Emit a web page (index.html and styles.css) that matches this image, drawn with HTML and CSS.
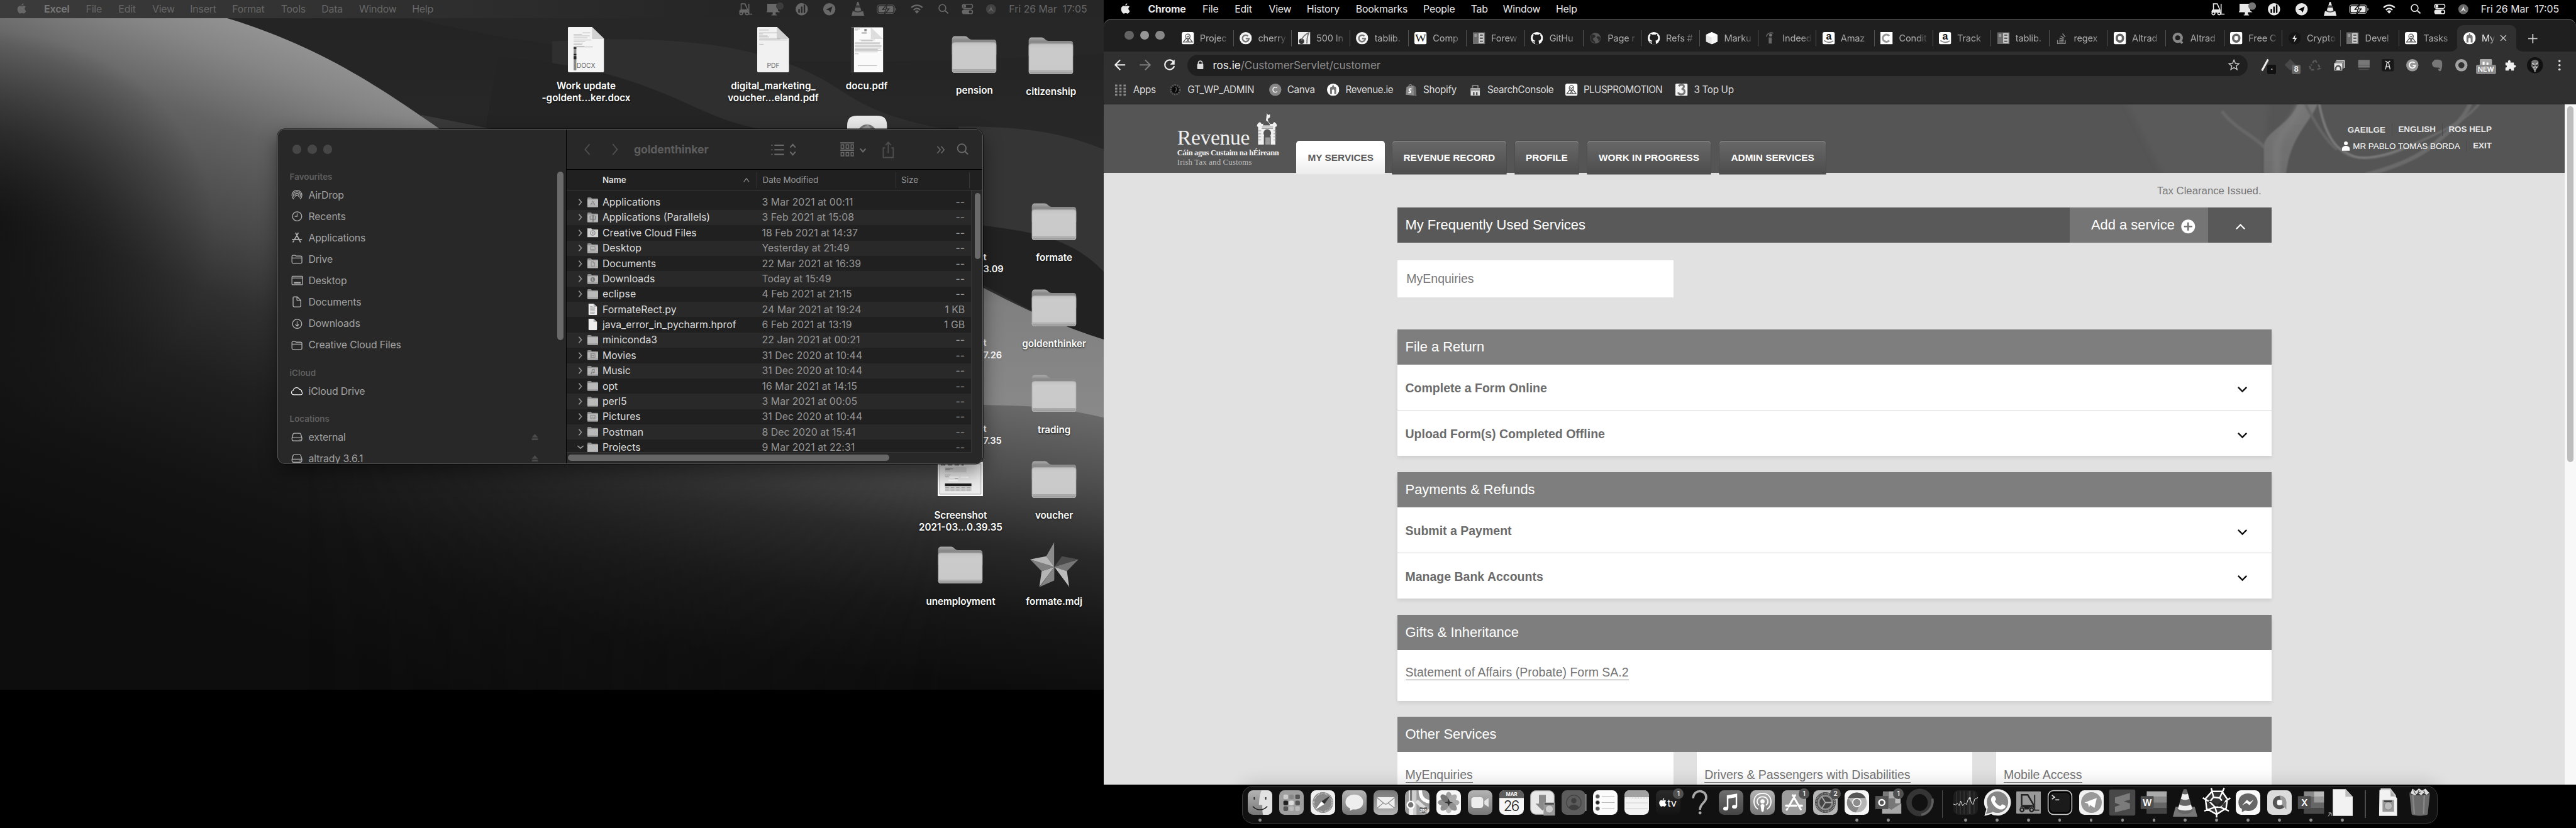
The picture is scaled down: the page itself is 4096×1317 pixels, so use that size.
FILE: index.html
```html
<!DOCTYPE html>
<html lang="en">
<head>
<meta charset="utf-8">
<title>Desktop</title>
<link rel="stylesheet" href="styles.css">
</head>
<body>
<svg class="defs" width="0" height="0">
  <defs>
    <linearGradient id="gFolder" x1="0" y1="0" x2="0" y2="1"><stop offset="0" stop-color="#c3c3c3"/><stop offset=".15" stop-color="#cbcbcb"/><stop offset="1" stop-color="#c9c9c9"/></linearGradient>
    <linearGradient id="gBack" x1="0" y1="0" x2="0" y2="1"><stop offset="0" stop-color="#ababab"/><stop offset=".2" stop-color="#8a8a8a"/><stop offset="1" stop-color="#8a8a8a"/></linearGradient>
    <linearGradient id="gMid" x1="0" y1="0" x2="0" y2="1"><stop offset="0" stop-color="#b4b4b4"/><stop offset="1" stop-color="#777"/></linearGradient>
    <linearGradient id="gMidUp" x1="0" y1="1" x2="0" y2="0"><stop offset="0" stop-color="#b4b4b4"/><stop offset="1" stop-color="#777"/></linearGradient>
    <linearGradient id="gWhite" x1="0" y1="0" x2="0" y2="1"><stop offset="0" stop-color="#fff"/><stop offset="1" stop-color="#d6d6d6"/></linearGradient>
    <linearGradient id="gDark" x1="0" y1="0" x2="0" y2="1"><stop offset="0" stop-color="#6e6e6e"/><stop offset="1" stop-color="#454545"/></linearGradient>
    <linearGradient id="gBlack" x1="0" y1="0" x2="0" y2="1"><stop offset="0" stop-color="#2a2a2a"/><stop offset="1" stop-color="#131313"/></linearGradient>
  </defs>
  <symbol id="apple" viewBox="0 0 24 28"><path d="M12 8.2c1.500 0 3.200-1.400 5.600-1.300 2 .1 3.900 1 5 2.700-4.400 2.700-3.700 8.700.9 10.500-1.200 3.300-3.600 7.400-6.200 7.400-1.900 0-2.500-1.200-4.800-1.200s-3 1.200-4.800 1.200C4.500 27.500.5 21.300.5 15.700.500 10 4 7 7.200 6.900c2.100 0 3.600 1.300 4.800 1.300zM16.500.500c.3 3-2.100 5.900-5 5.800C11.200 3.500 13.700.8 16.500.500z" fill="currentColor"/></symbol>
  <symbol id="extras" viewBox="1925 0 680 48">
    <g fill="none" stroke="currentColor" stroke-width="2.600"><path d="M1934 30V10h10l7 16v6M1930 32c0-4 2-6 5-6h14M1954 10v27h9"/></g>
    <g fill="currentColor"><path d="M1930 26h20v7h-20z"/><circle cx="1934" cy="35" r="5"/><circle cx="1949" cy="35" r="5"/></g>
    <g fill="var(--hole)"><circle cx="1934" cy="35" r="2"/><circle cx="1949" cy="35" r="2"/></g>
    <path d="M2002 10h28v18l6 4h-36l2-4zM2016 32h8v6h3v2h-14v-2h3z" fill="currentColor"/>
    <circle cx="2035" cy="16" r="10" fill="var(--dot)"/>
    <circle cx="2092" cy="24" r="16" fill="currentColor"/><path d="M2085 32v-7M2092 32V19M2099 32V14" stroke="var(--hole)" stroke-width="4" stroke-linecap="round"/>
    <circle cx="2164" cy="24" r="16" fill="currentColor"/><path d="M2155 25l17-8-5 16-4-6z" fill="var(--hole)"/>
    <path d="M2237 5h3l8 24h4l3 12h-33l3-12h4z" fill="currentColor"/><path d="M2234 14h9l2 6h-13zM2229 26c5 5 14 5 19 0l1 4c-5 3-16 3-21 0z" fill="var(--hole)" opacity=".7"/>
    <rect x="2289" y="13" width="45" height="22" rx="6" fill="none" stroke="currentColor" stroke-width="2" opacity=".7"/><rect x="2292" y="16" width="39" height="16" rx="3" fill="currentColor"/><path d="M2336 21c3 0 3 7 0 7z" fill="currentColor"/><path d="M2315 11l-12 14h8l-4 13 13-15h-8z" fill="currentColor" stroke="var(--hole)" stroke-width="2"/>
    <g fill="none" stroke="currentColor" stroke-width="4"><path d="M2378 20c8-8 21-8 29 0"/><path d="M2384 26c5-5 12-5 17 0"/></g><path d="M2387 29.500c3-3 8-3 11 0l-5.500 6z" fill="currentColor"/>
    <circle cx="2459" cy="21" r="9" fill="none" stroke="currentColor" stroke-width="2.600"/><path d="M2466 28l8 7" stroke="currentColor" stroke-width="3.200"/>
    <rect x="2511" y="11" width="27" height="11" rx="5.500" fill="none" stroke="currentColor" stroke-width="2.400"/><circle cx="2517" cy="16.500" r="4" fill="currentColor"/><rect x="2510" y="25" width="29" height="12" rx="6" fill="currentColor"/><circle cx="2532" cy="31" r="4" fill="var(--hole)"/>
    <circle cx="2586" cy="24" r="13" fill="currentColor" opacity=".45"/><path d="M2576 31c6-3 9-9 10-16 1 7 4 13 10 16-5-1-8-3-10-6-2 3-5 5-10 6z" fill="currentColor"/>
  </symbol>
  <symbol id="folder" viewBox="0 0 118 98"><path d="M1 12C1 4 4 1 10 1h25c7 0 10 9 18 9h56c6 0 8 3 8 9v30H1z" fill="url(#gBack)"/><path d="M1 24c0-5 3-7 8-7h100c5 0 8 2 8 7v65c0 6-3 8-8 8H9c-5 0-8-2-8-8z" fill="#b8b8b8"/><path d="M3 25c0-4 2-6 7-6h98c5 0 7 2 7 6v62H3z" fill="url(#gFolder)"/><path d="M2 88h114M2 91h114" stroke="#a2a2a2" stroke-width="1.500"/><path d="M3 92h112c-1 3-3 4-7 4H10c-4 0-6-1-7-4z" fill="#9f9f9f"/></symbol>
  <symbol id="fold" viewBox="0 0 28 26"><path d="M0 3c0-2 1-3 2-3h7l3 3h14c1 0 2 1 2 2v4H0z" fill="#8e8e8e"/><path d="M0 5.500h28V24c0 1-1 2-2 2H2c-1 0-2-1-2-2z" fill="#b9b9b9"/><path d="M0 22.500h28" stroke="#888"/></symbol>
  <symbol id="chev" viewBox="0 0 10 18"><path d="M1.500 2l6 7-6 7" fill="none" stroke="currentColor" stroke-width="2.800" stroke-linecap="round" stroke-linejoin="round"/></symbol>
  <symbol id="file" viewBox="0 0 28 30"><path d="M3 0h13l9 8v20c0 1-1 2-2 2H5c-1 0-2-1-2-2z" fill="#eee"/><path d="M16 0v8h9z" fill="#b5b5b5"/></symbol>
  <symbol id="s-folder" viewBox="0 0 30 30"><path d="M2 8c0-2 1-3 3-3h5l3 2h12c2 0 3 1 3 3v13c0 2-1 3-3 3H5c-2 0-3-1-3-3zM2 12h26" fill="none" stroke="currentColor" stroke-width="2.200"/></symbol>
  <symbol id="s-disk" viewBox="0 0 30 30"><path d="M8 5h14c2 0 2.500 1 3 2l3 11c0 5-1 7-4 7H6c-3 0-4-2-4-7L5 7c.500-1 1-2 3-2zM2.500 17h25M22 21h2" fill="none" stroke="currentColor" stroke-width="2.200"/></symbol>
  <symbol id="eject" viewBox="0 0 20 20"><path d="M10 1l9 10H1zM1 14h18v5H1z" fill="currentColor"/></symbol>
  <symbol id="caret" viewBox="0 0 28 18"><path d="M3 3l11 11L25 3" fill="none" stroke="currentColor" stroke-width="4"/></symbol>

  <symbol id="f-asana" viewBox="0 0 32 32"><rect width="32" height="32" rx="5" fill="#fff"/><g fill="none" stroke="#555" stroke-width="2"><circle cx="16" cy="11" r="6"/><path d="M4 26l8-10 8 10zM12 26l8-10 8 10zM13 10l3 3 4-4"/></g></symbol>
  <symbol id="f-g" viewBox="0 0 32 32"><circle cx="16" cy="16" r="16" fill="#f5f5f5"/><path d="M22 10.500A8.500 8.500 0 1 0 24.500 17H16" fill="none" stroke="#777" stroke-width="4"/></symbol>
  <symbol id="f-cherry" viewBox="0 0 32 32"><path fill="#eee" d="M0 0h32v32H0z"/><circle cx="9" cy="24" r="7" fill="#333"/><path d="M9 22C12 12 18 6 28 2c-4 9-5 17-5 28" stroke="#777" stroke-width="3" fill="none"/></symbol>
  <symbol id="f-w" viewBox="0 0 32 32"><rect width="32" height="32" rx="5" fill="#fff"/><text x="16" y="25" font-family="Liberation Serif,serif" font-size="27" text-anchor="middle" textLength="28" lengthAdjust="spacingAndGlyphs" fill="#111">W</text></symbol>
  <symbol id="f-rtd" viewBox="0 0 32 32"><path fill="#6d6d6d" d="M0 1h32v30H0z"/><path fill="#ccc" d="M15 3h14v26H15z"/><path d="M18 8h8M18 16h8M18 24h8" stroke="#444" stroke-width="3"/><path d="M4 5h6v8H4z" fill="#999"/></symbol>
  <symbol id="f-gh" viewBox="0 0 32 32"><circle cx="16" cy="16" r="16" fill="#fff"/><path d="M11 32v-5c-4 1-5-2-7-3 3-1 4 2 7 1 0-1 .5-2 1-2.500-5-.5-7-3-7-8 0-2 .6-3.500 2-5-.3-1.500-.2-3 .3-4.500 2 0 3.500 1 5 2 2.500-.6 5-.6 7.400 0 1.500-1 3-2 5-2 .5 1.500.6 3 .3 4.500 1.400 1.500 2 3 2 5 0 5-2 7.500-7 8 .8.800 1.200 2 1.200 3.500V32z" fill="#1f1f1f"/></symbol>
  <symbol id="f-globe" viewBox="0 0 32 32"><circle cx="16" cy="16" r="14" fill="#555"/><path d="M8 6c5 0 9 2 8 6s-7 2-6 7 6 3 5 9c-7-1-12-5-12-12 0-4 2-8 5-10zM20 12c5-2 8 0 9 3s-1 7-4 9c-2-2 0-5-2-6s-5-4-3-6z" fill="#2a2a2a"/></symbol>
  <symbol id="f-cube" viewBox="0 0 32 32"><path d="M16 0l15 7v18l-15 7-15-7V7z" fill="#e6e6e6"/><path d="M16 0l15 7-15 7L1 7z" fill="#fff"/><path d="M16 14v18l15-7V7z" fill="#f6f6f6"/></symbol>
  <symbol id="f-indeed" viewBox="0 0 32 32"><path d="M12 14h8v16h-8z" fill="#666"/><circle cx="17" cy="8" r="4" fill="#777"/><path d="M6 12C8 3 16 0 24 3" fill="none" stroke="#666" stroke-width="2.500"/></symbol>
  <symbol id="f-a" viewBox="0 0 32 32"><rect width="32" height="32" rx="5" fill="#fff"/><text x="16" y="20" font-family="Liberation Sans,sans-serif" font-weight="700" font-size="26" text-anchor="middle" fill="#111">a</text><path d="M4 22c7 6 16 6 24 1" fill="none" stroke="#888" stroke-width="3"/></symbol>
  <symbol id="f-c" viewBox="0 0 32 32"><path fill="#fff" d="M0 0h32v32H0z"/><path d="M23 10a9.500 9.500 0 1 0 0 12" fill="none" stroke="#999" stroke-width="5"/></symbol>
  <symbol id="f-so" viewBox="0 0 32 32"><path d="M6 21v9h20v-9M10 26h12M10 21l12 1M11 16l11 3M14 10l9 6M19 4l7 9" fill="none" stroke="#888" stroke-width="2.400"/></symbol>
  <symbol id="f-o" viewBox="0 0 32 32"><rect width="32" height="32" rx="4" fill="#fff"/><rect x="8" y="7" width="16" height="18" rx="8" fill="none" stroke="#666" stroke-width="6"/></symbol>
  <symbol id="f-q" viewBox="0 0 32 32"><circle cx="16" cy="15" r="10" fill="none" stroke="#888" stroke-width="7"/><path d="M20 20l8 9" stroke="#888" stroke-width="6"/></symbol>
  <symbol id="f-bolt" viewBox="0 0 32 32"><circle cx="16" cy="16" r="16" fill="#151515"/><path d="M18 6l-8 12h6l-2 9 8-12h-6z" fill="#eee"/></symbol>
  <symbol id="f-rev" viewBox="0 0 32 32"><circle cx="16" cy="16" r="16" fill="#fff"/><path d="M8 27V11l2-3h3l3-6 3 6h3l2 3v16h-5v-9c0-4-6-4-6 0v9z" fill="#777"/></symbol>
  <symbol id="f-three" viewBox="0 0 32 32"><rect width="32" height="32" rx="3" fill="#f4f4f4"/><path d="M9 7c3-6 14-5 13 1 0 4-4 6-6 6 5 0 8 3 8 7 0 8-14 10-17 2" fill="none" stroke="#777" stroke-width="5"/></symbol>
</svg>

<div class="stage">

<!-- left display -->
<section class="display left">
  <svg class="wallpaper" viewBox="0 0 2880 1800" preserveAspectRatio="none">
    <defs>
      <linearGradient id="wBase" x1="0" y1="0" x2="0" y2="1"><stop offset="0" stop-color="#232323"/><stop offset=".3" stop-color="#2a2a2a"/><stop offset=".7" stop-color="#262626"/><stop offset="1" stop-color="#0c0c0c"/></linearGradient>
      <linearGradient id="wSweep" gradientUnits="userSpaceOnUse" x1="1000" y1="160" x2="475" y2="1570"><stop offset="0" stop-color="#979797"/><stop offset=".08" stop-color="#868686"/><stop offset=".2" stop-color="#636363"/><stop offset=".36" stop-color="#494949"/><stop offset=".48" stop-color="#303030"/><stop offset=".62" stop-color="#1f1f1f"/><stop offset=".8" stop-color="#131313"/><stop offset="1" stop-color="#0d0d0d"/></linearGradient>
      <linearGradient id="wRight" x1="0" y1="0" x2="0" y2="1"><stop offset="0" stop-color="#6c6c6c"/><stop offset=".25" stop-color="#808080"/><stop offset="1" stop-color="#8a8a8a"/></linearGradient>
      <linearGradient id="wLow" gradientUnits="userSpaceOnUse" x1="2700" y1="1050" x2="2600" y2="1800"><stop offset="0" stop-color="#6b6b6b"/><stop offset=".25" stop-color="#4e4e4e"/><stop offset=".5" stop-color="#292929"/><stop offset=".75" stop-color="#161616"/><stop offset="1" stop-color="#0c0c0c"/></linearGradient>
      <linearGradient id="wFade" x1="0" y1="0" x2="1" y2="0"><stop offset="0" stop-color="#000"/><stop offset=".35" stop-color="#555"/><stop offset="1" stop-color="#fff"/></linearGradient>
      <mask id="mLow" maskUnits="userSpaceOnUse" x="800" y="1000" width="2080" height="800"><rect x="800" y="1000" width="1700" height="800" fill="url(#wFade)"/><rect x="2498" y="1000" width="382" height="800" fill="#fff"/></mask>
      <radialGradient id="wBlob"><stop offset="0" stop-color="#0e0e0e" stop-opacity=".85"/><stop offset=".5" stop-color="#0e0e0e" stop-opacity=".5"/><stop offset="1" stop-color="#0e0e0e" stop-opacity="0"/></radialGradient>
    </defs>
    <rect width="2880" height="1800" fill="url(#wBase)"/>
    <path d="M900 0c400 120 900 200 1980 140V0z" fill="#272727"/>
    <path d="M1440 108C1900 80 2080 160 2200 240s240 100 680 160v500H1440z" fill="#2f2f2f"/>
    <path d="M1300 150c300 20 420 90 560 150s300 50 400 110v300H1200z" fill="#242424"/>
    <path d="M2500 330c150 0 260 10 380 60v330c-100-100-240-110-380-130z" fill="#353535"/>
    <path d="M2500 580c130 20 280 20 380 130v200l-380-200z" fill="#222"/>
    <path d="M1100 300l200 40v60h-300z" fill="#3a3a3a"/>
    <path d="M0 0H400C760 70 950 200 1148 337L2500 1050H2880V1800H0z" fill="url(#wSweep)"/>
    <ellipse cx="-40" cy="600" rx="600" ry="520" fill="url(#wBlob)"/>
    <path d="M2450 690c150 80 280 150 430 196v230H2450z" fill="url(#wRight)"/>
    <path d="M800 1160l1650-110c150 15 250-5 430 40v710H800z" fill="url(#wLow)" mask="url(#mLow)"/>
  </svg>

  <nav class="menubar dim">
    <svg class="apple"><use href="#apple"/></svg>
    <b style="width:109px">Excel</b><span style="width:85px">File</span><span style="width:88px">Edit</span><span style="width:99px">View</span><span style="width:110px">Insert</span><span style="width:127px">Format</span><span style="width:106px">Tools</span><span style="width:98px">Data</span><span style="width:138px">Window</span><span>Help</span>
    <svg class="extras"><use href="#extras"/></svg><time>Fri 26 Mar&nbsp; 17:05</time>
  </nav>

  <figure class="item" style="left:1409px;top:70px"><svg class="doc" width="94" height="118" viewBox="0 0 94 118"><path d="M3 0h60l31 30v85c0 2-1 3-3 3H3c-2 0-3-1-3-3V3c0-2 1-3 3-3z" fill="#f4f4f4"/><path d="M63 0v31h31z" fill="#d2d2d2"/><path d="M38 15h20M15 19h22M15 23h42M15 28h36M15 34h46M15 37h30M15 42h24M15 45h22M15 50h28M15 52h50" stroke="#999" stroke-width="1"/><path d="M15 53h7v60h-7z" fill="#888"/><path d="M15 53h7v4h-7zM15 70h7v4h-7zM15 76h7v8h-7z" fill="#222"/><text x="47" y="107" font-size="17" text-anchor="middle" fill="#666">DOCX</text></svg><figcaption>Work update<br>-goldent...ker.docx</figcaption></figure>
  <figure class="item" style="left:1897px;top:70px"><svg class="doc" width="83" height="118" viewBox="0 0 83 118"><path d="M3 0h49l31 30v85c0 2-1 3-3 3H3c-2 0-3-1-3-3V3c0-2 1-3 3-3z" fill="#f1f1f1"/><path d="M51 0v31h32z" fill="#cfcfcf"/><path d="M5 8h25M5 15h47M5 18h10M5 23h22M5 26h26M5 31h55M5 34h74M5 45h12" stroke="#999"/><text x="42" y="107" font-size="17" text-anchor="middle" fill="#666">PDF</text></svg><figcaption>digital_marketing_<br>voucher...eland.pdf</figcaption></figure>
  <figure class="item" style="left:2141px;top:70px"><svg class="doc" width="84" height="118" viewBox="0 0 84 118"><rect y="1" width="84" height="117" rx="2" fill="#fafafa"/><path d="M0 1h8v117H0z" fill="#333"/><path d="M52 1v30h32z" fill="#ddd"/><path d="M35 5h6v6h-6z" fill="#888"/><path d="M28 14h13M28 17h13M10 5h14M10 8h8M22 34h40M27 36h30M10 41h66M10 44h66M10 49h70M10 52h70M10 55h68M10 58h60M10 61h70M10 65h60M10 70h10M18 101h50" stroke="#8a8a8a"/></svg><figcaption>docu.pdf</figcaption></figure>
  <svg class="free" style="left:2210px;top:302px" width="104" height="60" viewBox="0 0 104 60"><path d="M0 60V26C0 8 8 0 26 0h52c18 0 26 8 26 26v34z" fill="#e9e9e9"/><circle cx="52" cy="48" r="25" fill="#777"/><path d="M35 35l20-12 20 30z" fill="#999"/></svg>
  <figure class="item" style="left:2422px;top:93px"><svg width="118" height="98"><use href="#folder"/></svg><figcaption>pension</figcaption></figure>
  <figure class="item" style="left:2622px;top:96px"><svg width="118" height="98"><use href="#folder"/></svg><figcaption>citizenship</figcaption></figure>
  <figure class="item" style="left:2630px;top:530px"><svg width="118" height="98"><use href="#folder"/></svg><figcaption>formate</figcaption></figure>
  <figure class="item" style="left:2630px;top:754px"><svg width="118" height="98"><use href="#folder"/></svg><figcaption>goldenthinker</figcaption></figure>
  <figure class="item" style="left:2630px;top:978px"><svg width="118" height="98"><use href="#folder"/></svg><figcaption>trading</figcaption></figure>
  <figure class="item" style="left:2630px;top:1202px"><svg width="118" height="98"><use href="#folder"/></svg><figcaption>voucher</figcaption></figure>
  <figure class="item" style="left:2386px;top:1426px"><svg width="118" height="98"><use href="#folder"/></svg><figcaption>unemployment</figcaption></figure>
  <figure class="item" style="left:2386px;top:1202px"><svg width="118" height="98" viewBox="0 -3 118 98"><path d="M0 0h118v89H0z" fill="#fff"/><path d="M5 5h108v79H5z" fill="#ececec" stroke="#777"/><path d="M8 8h60" stroke="#333" stroke-width="2" stroke-dasharray="12 6"/><path d="M19 14h56v13H19z" fill="#d8d8d8"/><path d="M20 18h20M20 20h12M19 34h14M19 39h10M45 43h8" stroke="#555" stroke-width="1"/><path d="M31 38h24v3H31zM60 38h20v3H60zM28 46h25v4H28z" fill="#fff"/><path d="M19 56h69v7H19z" fill="#1c1c1c"/><path d="M19 64h69v12H19z" fill="#ccc"/><path d="M20 67h66M20 73h66" stroke="#777" stroke-dasharray="9 5"/></svg><figcaption>Screenshot<br>2021-03...0.39.35</figcaption></figure>
  <figure class="item" style="left:2630px;top:1412px"><svg width="126" height="118" viewBox="0 0 126 118" style="margin-bottom:-6px"><g transform="translate(0 2)"><path d="M63 65V0L42 37z" fill="#8c8c8c"/><path d="M63 65V0l20 37z" fill="#2a2a2a"/><path d="M63 65L83 37l43 8z" fill="#4c4c4c"/><path d="M63 65l63-20-30 31z" fill="#767676"/><path d="M63 65l33 11 6 42z" fill="#bcbcbc"/><path d="M63 65v35l39 17z" fill="#222"/><path d="M63 65v35l-38 17z" fill="#838383"/><path d="M63 65L30 76l-6 41z" fill="#b4b4b4"/><path d="M63 65L30 76 0 45z" fill="#808080"/><path d="M63 65L0 45l42-8z" fill="#b6b6b6"/></g></svg><figcaption>formate.mdj</figcaption></figure>
  <p class="cut" style="top:656px"><span>t</span>3.09</p>
  <p class="cut" style="top:880px"><span>t</span>7.26</p>
  <p class="cut" style="top:1104px"><span>t</span>7.35</p>

  <div class="finder">
    <aside>
      <div class="lights"><i></i><i></i><i></i></div>
      <h4>Favourites</h4>
      <ul>
        <li><svg viewBox="0 0 30 30"><g fill="none" stroke="currentColor" stroke-width="2"><path d="M7 26a13 13 0 1 1 16 0M9 22a9 9 0 1 1 12 0M11.500 19a5 5 0 1 1 7 0"/></g><circle cx="15" cy="16" r="2" fill="currentColor"/></svg>AirDrop</li>
        <li><svg viewBox="0 0 30 30"><circle cx="15.500" cy="15" r="12" fill="none" stroke="currentColor" stroke-width="2.200"/><path d="M15.500 7v8H9" fill="none" stroke="currentColor" stroke-width="2"/></svg>Recents</li>
        <li><svg viewBox="0 0 30 30"><path d="M12 3l12 23M18 3L9 19M3 20h15M21 20h6M7 23l-2 3" fill="none" stroke="currentColor" stroke-width="3" stroke-linecap="round"/></svg>Applications</li>
        <li><svg><use href="#s-folder"/></svg>Drive</li>
        <li><svg viewBox="0 0 30 30"><rect x="2" y="4" width="28" height="22" rx="2" fill="none" stroke="currentColor" stroke-width="2.200"/><path d="M2 8.500h28" stroke="currentColor" stroke-width="2"/><path d="M7 21h18" stroke="currentColor" stroke-width="4"/></svg>Desktop</li>
        <li><svg viewBox="0 0 30 30"><path d="M5 4c0-1 1-2 2-2h9l9 9v14c0 2-1 3-3 3H8c-2 0-3-1-3-3zM15 2v8c0 1 1 2 2 2h8" fill="none" stroke="currentColor" stroke-width="2.200"/></svg>Documents</li>
        <li><svg viewBox="0 0 30 30"><circle cx="15.500" cy="15" r="12" fill="none" stroke="currentColor" stroke-width="2.200"/><path d="M15.500 8v13M11 16.500l4.500 4.500 4.500-4.500" fill="none" stroke="currentColor" stroke-width="2"/></svg>Downloads</li>
        <li><svg><use href="#s-folder"/></svg>Creative Cloud Files</li>
      </ul>
      <h4>iCloud</h4>
      <ul><li><svg viewBox="0 0 32 30"><path d="M8 25c-9 0-9-11-2-12 1-8 13-11 17-3 6 0 7 5 6 7 4 3 2 8-3 8z" fill="none" stroke="#eee" stroke-width="2.200"/></svg>iCloud Drive</li></ul>
      <h4>Locations</h4>
      <ul>
        <li><svg><use href="#s-disk"/></svg>external<svg class="eject"><use href="#eject"/></svg></li>
        <li><svg><use href="#s-disk"/></svg>altrady 3.6.1<svg class="eject"><use href="#eject"/></svg></li>
      </ul>
      <div class="bar side"></div>
    </aside>
    <main>
      <header>
        <svg viewBox="0 0 1086 105"><g fill="none" stroke="#4e4e4e" stroke-width="3"><path d="M60 38L48 52l12 14M120 38l12 14-12 14"/><path d="M831 48h-5v25h26V48h-5M839 62V34M832 41l7-8 7 8"/></g><g fill="none" stroke="#696969" stroke-width="3.400"><path d="M542 41h25M542 53h25M542 65h25M534 41h3M534 53h3M534 65h3M583 47l7-8 7 8M583 58l7 8 7-8"/><path d="M714 35h36M714 54h36"/><path d="M716 40h7v9h-7zM729 40h7v9h-7zM742 40h6v9h-6zM716 60h7v9h-7zM729 60h7v9h-7zM742 60h6v9h-6z" stroke-width="2.600"/><path d="M766 50l7 8 7-8"/><path d="M967 44l8 9-8 9M977 44l8 9-8 9" stroke-width="2.600"/><circle cx="1031" cy="49" r="11" stroke-width="3"/><path d="M1039 57l8 8" stroke-width="3.500"/></g></svg>
        <strong>goldenthinker</strong>
      </header>
      <div class="heads"><b>Name</b><svg viewBox="0 0 16 14"><path d="M1 12l7-9 7 9" fill="none" stroke="#888" stroke-width="2"/></svg><span class="d">Date Modified</span><span class="s">Size</span></div>
      <ul class="rows">
        <li><svg class="ch"><use href="#chev"/></svg><svg class="ic" viewBox="0 0 28 26"><use href="#fold"/><path d="M14 9l-5 11M14 9l5 11M8 17h12" stroke="#7a7a7a" stroke-width="1.500"/></svg><span>Applications</span><time>3 Mar 2021 at 00:11</time><em>--</em></li>
        <li><svg class="ch"><use href="#chev"/></svg><svg class="ic" viewBox="0 0 28 26"><use href="#fold"/><path d="M7 9h14v9H7zM13 6v18M16 6v18" stroke="#777" stroke-width="2" fill="none"/></svg><span>Applications (Parallels)</span><time>3 Feb 2021 at 15:08</time><em>--</em></li>
        <li><svg class="ch"><use href="#chev"/></svg><svg class="ic" viewBox="0 0 28 26"><path d="M0 2h10l3 3h15v20H0z" fill="#d2d2d2"/><circle cx="14" cy="14" r="6" fill="none" stroke="#888" stroke-width="2"/><circle cx="14" cy="14" r="2" fill="#888"/></svg><span>Creative Cloud Files</span><time>18 Feb 2021 at 14:37</time><em>--</em></li>
        <li><svg class="ch"><use href="#chev"/></svg><svg class="ic" viewBox="0 0 28 26"><use href="#fold"/><path d="M8 9h12v9H8zM10 16h8" stroke="#888" stroke-width="1.600" fill="none"/></svg><span>Desktop</span><time>Yesterday at 21:49</time><em>--</em></li>
        <li><svg class="ch"><use href="#chev"/></svg><svg class="ic" viewBox="0 0 28 26"><use href="#fold"/><path d="M10 8h5l4 4v8h-9zM15 8v4h4" stroke="#888" stroke-width="1.500" fill="none"/></svg><span>Documents</span><time>22 Mar 2021 at 16:39</time><em>--</em></li>
        <li><svg class="ch"><use href="#chev"/></svg><svg class="ic" viewBox="0 0 28 26"><use href="#fold"/><circle cx="14" cy="14" r="6" fill="#777"/><path d="M14 10v7M11 14.500l3 3 3-3" stroke="#bbb" stroke-width="1.500" fill="none"/></svg><span>Downloads</span><time>Today at 15:49</time><em>--</em></li>
        <li><svg class="ch"><use href="#chev"/></svg><svg class="ic" viewBox="0 0 28 26"><use href="#fold"/></svg><span>eclipse</span><time>4 Feb 2021 at 21:15</time><em>--</em></li>
        <li><i class="ch"></i><svg class="ic tall" viewBox="0 0 28 30"><use href="#file"/><path d="M7 7h7M7 10h13M7 13h14M7 16h12M7 19h14M7 22h13M7 25h12" stroke="#999" stroke-width="1.500"/></svg><span>FormateRect.py</span><time>24 Mar 2021 at 19:24</time><em>1 KB</em></li>
        <li><i class="ch"></i><svg class="ic tall" viewBox="0 0 28 30"><use href="#file"/></svg><span>java_error_in_pycharm.hprof</span><time>6 Feb 2021 at 13:19</time><em>1 GB</em></li>
        <li><svg class="ch"><use href="#chev"/></svg><svg class="ic" viewBox="0 0 28 26"><use href="#fold"/></svg><span>miniconda3</span><time>22 Jan 2021 at 00:21</time><em>--</em></li>
        <li><svg class="ch"><use href="#chev"/></svg><svg class="ic" viewBox="0 0 28 26"><use href="#fold"/><path d="M8 9h12v10H8zM11 9v10M17 9v10M11 14h6" stroke="#888" stroke-width="1.500" fill="none"/></svg><span>Movies</span><time>31 Dec 2020 at 10:44</time><em>--</em></li>
        <li><svg class="ch"><use href="#chev"/></svg><svg class="ic" viewBox="0 0 28 26"><use href="#fold"/><path d="M12 19v-9l6-2v9" stroke="#777" stroke-width="1.600" fill="none"/><circle cx="10.500" cy="19" r="2" fill="#777"/><circle cx="16.500" cy="17" r="2" fill="#777"/></svg><span>Music</span><time>31 Dec 2020 at 10:44</time><em>--</em></li>
        <li><svg class="ch"><use href="#chev"/></svg><svg class="ic" viewBox="0 0 28 26"><use href="#fold"/></svg><span>opt</span><time>16 Mar 2021 at 14:15</time><em>--</em></li>
        <li><svg class="ch"><use href="#chev"/></svg><svg class="ic" viewBox="0 0 28 26"><use href="#fold"/></svg><span>perl5</span><time>3 Mar 2021 at 00:05</time><em>--</em></li>
        <li><svg class="ch"><use href="#chev"/></svg><svg class="ic" viewBox="0 0 28 26"><use href="#fold"/><path d="M8 9h12v9H8zM9 17l4-4 3 3 2-2 2 3" stroke="#888" stroke-width="1.500" fill="none"/></svg><span>Pictures</span><time>31 Dec 2020 at 10:44</time><em>--</em></li>
        <li><svg class="ch"><use href="#chev"/></svg><svg class="ic" viewBox="0 0 28 26"><use href="#fold"/></svg><span>Postman</span><time>8 Dec 2020 at 15:41</time><em>--</em></li>
        <li><svg class="ch open"><use href="#chev"/></svg><svg class="ic" viewBox="0 0 28 26"><use href="#fold"/></svg><span>Projects</span><time>9 Mar 2021 at 22:31</time><em>--</em></li>
      </ul>
      <div class="hscroll"><div></div></div>
      <div class="bar table"></div>
    </main>
  </div>
</section>

<!-- right display -->
<section class="display right">
  <nav class="menubar">
    <svg class="apple"><use href="#apple"/></svg>
    <b style="width:142px">Chrome</b><span style="width:84px">File</span><span style="width:89px">Edit</span><span style="width:99px">View</span><span style="width:128px">History</span><span style="width:176px">Bookmarks</span><span style="width:124px">People</span><span style="width:84px">Tab</span><span style="width:138px">Window</span><span>Help</span>
    <svg class="extras"><use href="#extras"/></svg><time>Fri 26 Mar&nbsp; 17:05</time>
  </nav>

  <div class="chrome">
    <div class="strip">
      <div class="lights"><i></i><i></i><i></i></div>
      <ul>
        <li><svg><use href="#f-asana"/></svg><span>Projec</span></li>
        <li><svg><use href="#f-g"/></svg><span>cherry</span></li>
        <li><svg><use href="#f-cherry"/></svg><span>500 In</span></li>
        <li><svg><use href="#f-g"/></svg><span>tablib.</span></li>
        <li><svg><use href="#f-w"/></svg><span>Comp</span></li>
        <li><svg><use href="#f-rtd"/></svg><span>Forew</span></li>
        <li><svg><use href="#f-gh"/></svg><span>GitHu</span></li>
        <li><svg><use href="#f-globe"/></svg><span>Page r</span></li>
        <li><svg><use href="#f-gh"/></svg><span>Refs #</span></li>
        <li><svg><use href="#f-cube"/></svg><span>Marku</span></li>
        <li><svg><use href="#f-indeed"/></svg><span>Indeed</span></li>
        <li><svg><use href="#f-a"/></svg><span>Amaz</span></li>
        <li><svg><use href="#f-c"/></svg><span>Condit</span></li>
        <li><svg><use href="#f-a"/></svg><span>Track</span></li>
        <li><svg><use href="#f-rtd"/></svg><span>tablib.</span></li>
        <li><svg><use href="#f-so"/></svg><span>regex</span></li>
        <li><svg><use href="#f-o"/></svg><span>Altrad</span></li>
        <li><svg><use href="#f-q"/></svg><span>Altrad</span></li>
        <li><svg><use href="#f-o"/></svg><span>Free C</span></li>
        <li><svg><use href="#f-bolt"/></svg><span>Crypto</span></li>
        <li><svg><use href="#f-rtd"/></svg><span>Devel</span></li>
        <li class="last"><svg><use href="#f-asana"/></svg><span>Tasks</span></li>
        <li class="on"><svg><use href="#f-rev"/></svg><span>My</span><svg class="x" viewBox="0 0 20 20"><path d="M2 2l16 16M18 2L2 18" stroke="#ddd" stroke-width="2.400"/></svg></li>
      </ul>
      <svg class="plus" viewBox="0 0 24 24"><path d="M12 0v24M0 12h24" stroke="#ccc" stroke-width="3"/></svg>
    </div>
    <div class="tools">
      <svg class="nav" viewBox="0 0 200 60"><g fill="none" stroke-width="3.400"><path d="M56 30H30M43 17L30 30l13 13" stroke="#eee"/><path d="M94 30h26M108 17l13 13-13 13" stroke="#7d7d7d"/><path d="M182 22a12.500 12.500 0 1 0 2 11" stroke="#eee"/></g><path d="M185 16v13h-12z" fill="#eee"/></svg>
      <div class="omni"><svg width="18" height="24" viewBox="0 0 18 24"><path d="M4 10V6c0-6 10-6 10 0v4" fill="none" stroke="#ddd" stroke-width="2.400"/><rect x="1" y="9" width="16" height="14" rx="2" fill="#ddd"/></svg><p>ros.ie<span>/CustomerServlet/customer</span></p><svg class="star" viewBox="0 0 30 30"><path d="M15 2.500l3.700 8.600 9.300.8-7.100 6.100 2.200 9.200-8.100-4.900-8.100 4.900 2.200-9.200L2 11.900l9.300-.8z" fill="none" stroke="#ccc" stroke-width="2.400"/></svg></div>
      <ul class="exts">
        <li><svg viewBox="0 0 32 32"><path d="M22 1L6 30" stroke="#eee" stroke-width="5"/><path d="M24 2l-4 9" stroke="#777" stroke-width="2"/></svg><i class="tag k">·</i></li>
        <li><svg viewBox="0 0 32 32"><path d="M16 0l15 15-15 15L1 15z" fill="#484848"/></svg><i class="tag">8</i></li>
        <li><svg viewBox="0 0 32 32"><path d="M10 10l6-8 6 8M25 14l5 10-8 3M14 28H5l-2-9 5-5" fill="none" stroke="#595959" stroke-width="4" stroke-dasharray="8 3"/></svg></li>
        <li><svg viewBox="0 0 32 32"><path d="M8 3h22v20H8z" fill="#ddd"/><path d="M5 6h22v20H5z" fill="#bbb" stroke="#333"/><path d="M2 10h22v20H2z" fill="#e8e8e8" stroke="#333"/><path d="M6 28c0-14 14-14 14 0" fill="none" stroke="#555" stroke-width="4"/></svg></li>
        <li><svg viewBox="0 0 32 32"><path d="M1 2h30v20H1z" fill="#777"/><path d="M1 16h30" stroke="#444"/><path d="M3 27h26" stroke="#4a4a4a" stroke-width="3"/></svg></li>
        <li><svg viewBox="0 0 32 32"><rect width="32" height="32" rx="4" fill="#181818"/><path d="M10 27l4-18h4l4 18M12 20h8M10 5l6 4 6-4" stroke="#ddd" stroke-width="2.400" fill="none"/></svg></li>
        <li><svg viewBox="0 0 32 32"><circle cx="16" cy="16" r="16" fill="#999"/><path d="M22 10a8 8 0 1 0 2 7h-7" fill="none" stroke="#fff" stroke-width="3"/></svg></li>
        <li><svg viewBox="0 0 32 32"><path d="M3 10l7-8c9-2 18 0 19 4 2 8 1 15-2 24-3 3-8 1-7-4 2-2 4 0 4 1 2-5-3-5-7-5-8 1-13-2-14-12z" fill="#777"/></svg></li>
        <li><svg viewBox="0 0 32 32"><circle cx="16" cy="16" r="12" fill="none" stroke="#a3a3a3" stroke-width="8"/></svg></li>
        <li><svg viewBox="0 0 32 32"><rect width="32" height="32" rx="3" fill="#a8a8a8"/><path d="M10 7v14M20 9v14" stroke="#fff" stroke-width="5"/></svg><i class="tag n">NEW</i></li>
        <li><svg viewBox="0 0 32 32"><path d="M3 9h7c-3-8 9-8 6 0h9v7c7-2 7 8 0 6v8h-7c2-6-8-6-6 0H3v-8c5 1 5-7 0-6z" fill="#f0f0f0"/></svg></li>
        <li><svg class="me" viewBox="0 0 44 44"><circle cx="22" cy="22" r="22" fill="#111"/><path d="M12 12c6-7 14-7 20 0-2 8 3 12-4 18-4 8-9 8-12 0-7-5-2-10-4-18z" fill="#777"/><path d="M14 16l6 4M30 15l-6 5M18 29c3-3 6-3 9 0M22 32v8" stroke="#ddd" stroke-width="2.500"/><path d="M16 22h4M25 22h4" stroke="#111" stroke-width="3"/></svg></li>
        <li><svg viewBox="0 0 32 32"><circle cx="16" cy="5" r="3" fill="#ddd"/><circle cx="16" cy="16" r="3" fill="#ddd"/><circle cx="16" cy="27" r="3" fill="#ddd"/></svg></li>
      </ul>
    </div>
    <ul class="marks">
      <li style="width:141px"><svg style="width:28px;margin-right:19px" viewBox="0 0 28 30"><path d="M0 4h28M0 12h28M0 20h28M0 28h28" stroke="#8b8b8b" stroke-width="5" stroke-dasharray="6 5"/></svg>Apps</li>
      <li style="width:260px"><svg viewBox="0 0 32 32"><circle cx="16" cy="16" r="12" fill="#0b0b0b" stroke="#555" stroke-width="5" stroke-dasharray="4 2"/><path d="M16 10c5 0 3 9 0 12" stroke="#666" stroke-width="2" fill="none"/></svg>GT_WP_ADMIN</li>
      <li style="width:152px"><svg viewBox="0 0 32 32"><circle cx="16" cy="16" r="16" fill="#878787"/><path d="M21 11.500a6.500 6.500 0 1 0 0 9" fill="none" stroke="#eee" stroke-width="2.600"/></svg>Canva</li>
      <li style="width:203px"><svg><use href="#f-rev"/></svg>Revenue.ie</li>
      <li style="width:167px"><svg viewBox="0 0 32 32"><path d="M4 8l18-3 6 4 2 23-7-1-21-2z" fill="#8b8b8b"/><path d="M22 5l6 4 2 23-7-1z" fill="#6a6a6a"/><path d="M9 9c1-7 7-9 9-3" fill="none" stroke="#888" stroke-width="2"/><path d="M17 14c-6-2-8 3-4 5s2 6-4 4" fill="none" stroke="#fff" stroke-width="3"/></svg>Shopify</li>
      <li style="width:251px"><svg viewBox="0 0 32 32"><path d="M4 12h24v19H4z" fill="#ddd"/><path d="M9 11V5h14v6" fill="none" stroke="#888" stroke-width="3"/><path d="M4 13h24v6H4z" fill="#999"/><path d="M12 30v-8M20 30v-8" stroke="#555" stroke-width="4"/></svg>SearchConsole</li>
      <li class="plusp" style="width:288px"><svg><use href="#f-asana"/></svg>PLUSPROMOTION</li>
      <li><svg><use href="#f-three"/></svg>3 Top Up</li>
    </ul>
    <div class="view">
      <div class="page">
        <header class="ros">
          <svg class="art" viewBox="0 0 1211 180"><defs><filter id="b8" x="-30%" y="-30%" width="160%" height="160%"><feGaussianBlur stdDeviation="7"/></filter><filter id="b3" x="-30%" y="-30%" width="160%" height="160%"><feGaussianBlur stdDeviation="2"/></filter><linearGradient id="stem" x1="0" y1="0" x2="0" y2="1"><stop offset="0" stop-color="#777"/><stop offset="1" stop-color="#6c6c6c"/></linearGradient></defs>
            <path d="M60 -20h380l-20 220H170z" fill="#5a5a5a" filter="url(#b8)"/>
            <path d="M316 18c40 50 80 60 112 95" stroke="#676767" stroke-width="9" fill="none" filter="url(#b3)"/>
            <path d="M426 200v-95c10-40 70-50 92-115h52c-20 60-80 90-88 210z" fill="url(#stem)" filter="url(#b3)"/>
            <path d="M460 200v-90c5-40 50-60 62-115" stroke="#7a7a7a" stroke-width="14" fill="none" filter="url(#b8)"/>
            <path d="M535 0c30 60 60 100 82 118" stroke="#666" stroke-width="7" fill="none" filter="url(#b3)"/>
            <path d="M570 -4c12 64 35 110 65 130s90 20 156-10C860 84 950 50 989 -4" stroke="#6a6a6a" stroke-width="6" fill="none" filter="url(#b3)"/>
            <path d="M570 -4c10 60 30 105 58 122s40 24 75 20 70-16 92-26" stroke="#7e7e7e" stroke-width="4" fill="none" filter="url(#b3)"/>
            <path d="M690 184c90-22 150-54 180-80S950 40 965 -4" stroke="#6a6a6a" stroke-width="11" fill="none" filter="url(#b3)"/>
          </svg>
          <div class="logo">
            <p class="r1">Revenue</p><p class="r2">Cáin agus Custaim na hÉireann</p><p class="r3">Irish Tax and Customs</p>
            <svg viewBox="0 0 56 84"><path d="M27 0l3 5 5-2v8l-6 4 2 8 5 5h6l4-5c5 3 8 7 7 11l-4 2v46H37V62c0-12-18-12-18 0v20H4V36l-3-2c0-5 3-9 8-11l4 5h5l6-5z" fill="#f0f0f0"/><path d="M17 29l9-10 9 10v3H17z" fill="#555"/><circle cx="28" cy="52" r="10" fill="#555"/><path d="M14 36h29M14 40h29M4 46h8M4 54h8M4 62h8M4 70h8M44 46h8M44 54h8M44 62h8M44 70h8" stroke="#888" stroke-width="1.500"/><path d="M23 63h12v19H23z" fill="#999"/></svg>
          </div>
          <ul class="rtabs"><li class="on" style="width:231px">MY SERVICES</li><li style="width:297px">REVENUE RECORD</li><li style="width:166px">PROFILE</li><li style="width:322px">WORK IN PROGRESS</li><li style="width:277px">ADMIN SERVICES</li></ul>
          <div class="user">
            <p><b>GAEILGE</b><b>ENGLISH</b><b>ROS HELP</b></p>
            <p><svg viewBox="0 0 20 24"><circle cx="10" cy="5" r="5" fill="#fff"/><path d="M0 24v-5c0-10 20-10 20 0v5z" fill="#fff"/></svg><span>MR PABLO TOMAS BORDA</span><b>EXIT</b></p>
          </div>
        </header>
        <div class="wrap">
          <p class="tax">Tax Clearance Issued.</p>
          <div class="freq"><h2>My Frequently Used Services</h2><div class="add">Add a service<svg viewBox="0 0 38 38"><circle cx="19" cy="19" r="18.500" fill="#fff"/><path d="M19 8v22M8 19h22" stroke="#757575" stroke-width="4.500"/></svg></div><svg class="up" viewBox="0 0 28 18"><path d="M3 15L14 4l11 11" fill="none" stroke="#fff" stroke-width="3.500"/></svg></div>
          <div class="fav">MyEnquiries</div>
          <section><h2>File a Return</h2><div class="row">Complete a Form Online<svg><use href="#caret"/></svg></div><div class="row">Upload Form(s) Completed Offline<svg><use href="#caret"/></svg></div></section>
          <section><h2>Payments &amp; Refunds</h2><div class="row">Submit a Payment<svg><use href="#caret"/></svg></div><div class="row">Manage Bank Accounts<svg><use href="#caret"/></svg></div></section>
          <section class="gift"><h2>Gifts &amp; Inheritance</h2><div class="solo"><a>Statement of Affairs (Probate) Form SA.2</a></div></section>
          <section class="other"><h2>Other Services</h2><div class="cards"><div><a>MyEnquiries</a></div><div><a>Drivers &amp; Passengers with Disabilities</a></div><div><a>Mobile Access</a></div></div></section>
        </div>
      </div>
      <div class="scroll"><div></div></div>
    </div>
  </div>

  <ul class="dock">
    <li class="run"><svg viewBox="0 0 64 64"><rect width="64" height="64" rx="14" fill="url(#gMid)"/><path d="M36 0h14c9 0 14 5 14 14v36c0 9-5 14-14 14H40c-2-8-2-14-2-26h-9C30 24 31 12 36 0z" fill="#e2e2e2"/><path d="M17 18v6M47 18v6" stroke="#222" stroke-width="3"/><path d="M13 42c11 12 27 12 38 0" fill="none" stroke="#222" stroke-width="2.500"/></svg></li>
    <li><svg viewBox="0 0 64 64"><rect width="64" height="64" rx="14" fill="#9f9f9f"/><g><rect x="11" y="11" width="12" height="12" rx="3" fill="#ccc"/><rect x="26" y="11" width="12" height="12" rx="3" fill="#888"/><rect x="42" y="11" width="12" height="12" rx="3" fill="#555"/><rect x="11" y="27" width="12" height="12" rx="3" fill="#222"/><rect x="26" y="27" width="12" height="12" rx="3" fill="#ddd"/><rect x="42" y="27" width="12" height="12" rx="3" fill="#555"/><rect x="11" y="42" width="12" height="12" rx="3" fill="#555"/><rect x="26" y="42" width="12" height="12" rx="3" fill="#bbb"/><rect x="42" y="42" width="12" height="12" rx="3" fill="#bbb"/></g></svg></li>
    <li><svg viewBox="0 0 64 64"><rect width="64" height="64" rx="14" fill="#efefef"/><circle cx="32" cy="32" r="27" fill="#888"/><circle cx="32" cy="32" r="24" fill="none" stroke="#ddd" stroke-width="4" stroke-dasharray="1.200 2.500"/><path d="M52 13L36 36l-8-7z" fill="#333"/><path d="M13 50l15-21 8 7z" fill="#fff"/></svg></li>
    <li><svg viewBox="0 0 64 64"><rect width="64" height="64" rx="14" fill="url(#gMid)"/><path d="M32 11c13 0 23 8 23 20s-10 19-23 19h-5c-2 2-5 3-8 3 2-2 2-4 2-6C13 44 9 38 9 31c0-12 10-20 23-20z" fill="#eee"/></svg></li>
    <li><svg viewBox="0 0 64 64"><rect width="64" height="64" rx="14" fill="url(#gMidUp)"/><rect x="9" y="18" width="46" height="29" rx="4" fill="#efefef"/><path d="M10 20l18 15c3 2 5 2 8 0l18-15M10 46l16-13M54 46L38 33" fill="none" stroke="#888" stroke-width="2"/></svg></li>
    <li><svg viewBox="0 0 64 64"><clipPath id="mapClip"><rect width="64" height="64" rx="14"/></clipPath><g clip-path="url(#mapClip)"><rect width="64" height="64" fill="#9c9c9c"/><path d="M26 0v64" stroke="#ccc" stroke-width="8"/><path d="M16 0v64" stroke="#eee" stroke-width="12"/><path d="M16 0v30" stroke="#777" stroke-width="6"/><path d="M30 28l34 30" stroke="#ddd" stroke-width="10"/><path d="M40 0c0 18 8 28 24 30" fill="none" stroke="#fff" stroke-width="9"/><circle cx="15" cy="38" r="9" fill="#777" stroke="#fff" stroke-width="4"/></g><path d="M38 43l10 2 10-2c4 9-2 16-10 18-8-2-14-9-10-18z" fill="#666" stroke="#eee"/><text x="48" y="55" font-size="9" font-weight="700" text-anchor="middle" fill="#fff">280</text></svg></li>
    <li><svg viewBox="0 0 64 64"><rect width="64" height="64" rx="14" fill="#f7f7f7"/><g opacity=".8"><ellipse cx="32" cy="17" rx="8" ry="13" fill="#888"/><ellipse cx="32" cy="47" rx="8" ry="13" fill="#aaa"/><ellipse cx="17" cy="32" rx="13" ry="8" fill="#777"/><ellipse cx="47" cy="32" rx="13" ry="8" fill="#999"/><g transform="rotate(45 32 32)"><ellipse cx="32" cy="17" rx="8" ry="13" fill="#999"/><ellipse cx="32" cy="47" rx="8" ry="13" fill="#777"/><ellipse cx="17" cy="32" rx="13" ry="8" fill="#555"/><ellipse cx="47" cy="32" rx="13" ry="8" fill="#777"/></g></g><path d="M32 22l3 8 8 2-8 2-3 8-3-8-8-2 8-2z" fill="#333"/></svg></li>
    <li><svg viewBox="0 0 64 64"><rect width="64" height="64" rx="14" fill="url(#gMid)"/><rect x="9" y="18" width="31" height="28" rx="7" fill="#eee"/><path d="M43 28l11-8v24l-11-8z" fill="#e4e4e4"/></svg></li>
    <li><svg viewBox="0 0 64 64"><rect width="64" height="64" rx="14" fill="#f6f6f6"/><path d="M0 20v-6C0 5 5 0 14 0h36c9 0 14 5 14 14v6z" fill="#5d5d5d"/><text x="32" y="15.500" font-size="13" font-weight="600" text-anchor="middle" fill="#fff">MAR</text><text x="32" y="54" font-size="37" font-weight="300" text-anchor="middle" textLength="42" fill="#222">26</text></svg></li>
    <li><svg viewBox="0 0 64 64"><rect x="1" y="1" width="62" height="62" rx="14" fill="#e8e8e8" stroke="#999" stroke-width="2"/><path d="M23 12h18v23h9L32 53 14 35h9z" fill="#8a8a8a"/><path d="M35 32h30v34H35z" fill="#999"/><path d="M38 34h24v3H38z" fill="#333"/><circle cx="50" cy="49" r="10" fill="#ccc" stroke="#777"/></svg></li>
    <li><svg viewBox="0 0 64 64"><path d="M60 10h5v44h-5z" fill="#8a8a8a"/><rect width="62" height="64" rx="14" fill="#5c5c5c"/><circle cx="32" cy="32" r="19" fill="none" stroke="#3e3e3e" stroke-width="2"/><circle cx="32" cy="27" r="7" fill="#3e3e3e"/><path d="M19 45c3-10 23-10 26 0-7 8-19 8-26 0z" fill="#3e3e3e"/></svg></li>
    <li><svg viewBox="0 0 64 64"><rect width="64" height="64" rx="14" fill="#fbfbfb"/><path d="M23 16h33M23 32h33M23 48h33" stroke="#bbb" stroke-width="2"/><g stroke="#888" stroke-width="1.500" fill="#555"><circle cx="12" cy="16" r="5"/><circle cx="12" cy="32" r="5" fill="#222"/><circle cx="12" cy="48" r="5"/></g></svg></li>
    <li><svg viewBox="0 0 64 64"><rect width="64" height="64" rx="14" fill="#f3f3f3"/><path d="M0 18v-4C0 5 5 0 14 0h36c9 0 14 5 14 14v4z" fill="#a2a2a2"/><path d="M0 20h64" stroke="#888" stroke-dasharray="2 2"/><path d="M3 33h58M3 48h58" stroke="#ccc" stroke-width="1.500"/></svg></li>
    <li><svg viewBox="0 0 64 64"><rect width="64" height="64" rx="14" fill="url(#gBlack)"/><svg x="8" y="20" width="20" height="23" color="#fff"><use href="#apple"/></svg><text x="42" y="42" font-size="27" text-anchor="middle" fill="#fff">tv</text></svg><i>1</i></li>
    <li><svg viewBox="0 0 64 64"><path d="M15 21C16-5 51-2 49 20c-1 13-16 14-16 31" fill="none" stroke="#a8a8a8" stroke-width="6"/><circle cx="33" cy="59" r="4" fill="#a8a8a8"/></svg></li>
    <li><svg viewBox="0 0 64 64"><rect width="64" height="64" rx="14" fill="url(#gDark)"/><path d="M23 47V15l23-4v32" fill="none" stroke="#fff" stroke-width="4"/><path d="M23 15l23-4v7l-23 4z" fill="#fff"/><ellipse cx="18" cy="48" rx="6.500" ry="5" fill="#fff"/><ellipse cx="41" cy="43" rx="6.500" ry="5" fill="#fff"/></svg></li>
    <li><svg viewBox="0 0 64 64"><rect width="64" height="64" rx="14" fill="url(#gMid)"/><g fill="none" stroke="#fff" stroke-width="3"><path d="M20 49C4 40 6 8 32 8s28 32 12 41"/><path d="M23 39c-10-8-4-22 9-22s19 14 9 22"/></g><circle cx="32" cy="29" r="5.500" fill="#fff"/><path d="M27 40c0-5 10-5 10 0l-2 14c-1 3-5 3-6 0z" fill="#fff"/></svg></li>
    <li><svg viewBox="0 0 64 64"><rect width="64" height="64" rx="14" fill="#9c9c9c"/><path d="M29 13l21 37M35 13L18 43M11 40h27M45 40h8M15 48l-2 3" stroke="#fff" stroke-width="5" stroke-linecap="round"/></svg><i>1</i></li>
    <li><svg viewBox="0 0 64 64"><rect width="64" height="64" rx="14" fill="#b6b6b6"/><circle cx="32" cy="32" r="27" fill="#444"/><circle cx="32" cy="32" r="24" fill="none" stroke="#999" stroke-width="4" stroke-dasharray="2 2"/><circle cx="32" cy="32" r="18" fill="none" stroke="#8d8d8d" stroke-width="5"/><path d="M32 32h18M32 32l-10-16M32 32L22 48" stroke="#aaa" stroke-width="3"/></svg><i>2</i></li>
    <li class="run"><svg viewBox="0 0 64 64"><rect width="64" height="64" rx="14" fill="#f7f7f7"/><circle cx="32" cy="32" r="26" fill="#b5b5b5"/><path d="M9 20C18 1 46 1 55 20H32z" fill="#555"/><path d="M9 20c-8 18 3 36 20 38l12-21-20-1z" fill="#888"/><circle cx="32" cy="32" r="12" fill="#fff"/><circle cx="32" cy="32" r="9.500" fill="#8c8c8c"/></svg></li>
    <li class="run"><svg viewBox="0 0 64 64"><path d="M18 3h46v58H16z" fill="#777"/><path d="M34 3h16v18H34z" fill="#aaa"/><path d="M50 10h14v24H50z" fill="#bbb"/><path d="M16 61V36l24 15 26-17v27z" fill="#a8a8a8"/><path d="M-2 15h34v34H-2z" fill="#555"/><circle cx="15" cy="32" r="7.500" fill="none" stroke="#fff" stroke-width="4"/></svg><i>1</i></li>
    <li><svg viewBox="0 0 64 64"><ellipse cx="32" cy="32" rx="28" ry="29" fill="none" stroke="#353535" stroke-width="14"/><path d="M36 64C58 58 68 40 65 22" fill="none" stroke="#5f5f5f" stroke-width="6"/></svg></li>
    <li class="div"></li>
    <li class="run"><svg viewBox="0 0 64 64"><rect width="64" height="64" rx="14" fill="#1e1e1e"/><path d="M8 4v56M18 2v60M28 2v60M38 2v60M54 4v56" stroke="#444" stroke-width="1.500"/><path d="M43 2v60" stroke="#aaa"/><path d="M0 36l6 2 4-4 5 6 4-12 5 12 6-6 4 3 4-12 5-6 4 14 4 4 5-14 8-4" fill="none" stroke="#eee" stroke-width="1.600"/><circle cx="43" cy="21" r="3" fill="#ccc"/></svg></li>
    <li class="run"><svg viewBox="0 0 64 64"><path d="M33-3c20 0 35 15 35 34S53 66 33 66c-6 0-12-1-16-4L-1 67l5-18C0 44-2 38-2 31-2 12 13-3 33-3z" fill="#f2f2f2"/><circle cx="33" cy="31" r="28" fill="#868686"/><path d="M3 62l5-18 13 13z" fill="#868686"/><path d="M19 17c4-5 7-3 10 5 1 4-3 5-3 7 4 6 8 10 14 12 3 0 4-6 7-4 9 4 9 5 4 10-8 7-20 1-27-7-8-9-10-17-5-23z" fill="#fff"/></svg></li>
    <li class="run"><svg viewBox="0 0 64 64"><rect y="3" width="64" height="58" rx="2" fill="#999"/><path d="M14 40V12h16l14 24v10" fill="none" stroke="#222" stroke-width="4"/><path d="M10 48c0-8 5-10 12-10h20v12H10z" fill="#222"/><circle cx="15" cy="51" r="7" fill="#222" stroke="#999"/><circle cx="40" cy="51" r="7" fill="#222" stroke="#999"/><circle cx="15" cy="51" r="3" fill="#999"/><circle cx="40" cy="51" r="3" fill="#999"/><path d="M48 12v40h12" fill="none" stroke="#222" stroke-width="3"/></svg></li>
    <li class="run"><svg viewBox="0 0 64 64"><rect x="1" y="1" width="62" height="62" rx="14" fill="#1c1c1c" stroke="#c8c8c8" stroke-width="2.500"/><rect x="5" y="5" width="54" height="54" rx="11" fill="#1b1b1b" stroke="#000" stroke-width="3"/><path d="M11 13l7 5-7 5M20 25h10" fill="none" stroke="#eee" stroke-width="2.500"/></svg></li>
    <li class="run"><svg viewBox="0 0 64 64"><rect width="64" height="64" rx="14" fill="#f3f3f3"/><circle cx="32" cy="32" r="27" fill="#999"/><path d="M14 32l32-12-6 26-12-8-2 7-3-10z" fill="#fff"/></svg></li>
    <li class="run"><svg viewBox="0 0 64 64"><rect x="-2" y="-2" width="68" height="68" rx="4" fill="#484848"/><path d="M13 19l39-12v17L36 29l16 5v14L13 58V43l14-5-14-5z" fill="#7b7b7b"/></svg></li>
    <li class="run"><svg viewBox="0 0 64 64"><path d="M14 3h52v58H14z" fill="#666"/><path d="M14 3h52v14H14z" fill="#aaa"/><path d="M14 17h52v15H14z" fill="#888"/><path d="M14 46h52v15H14z" fill="#444"/><rect x="-2" y="15" width="34" height="34" rx="2" fill="#4e4e4e"/><text x="15" y="41" font-size="24" font-weight="600" text-anchor="middle" fill="#fff">W</text></svg></li>
    <li class="run"><svg viewBox="0 0 64 64"><path d="M7 43h50l7 26H0z" fill="#777"/><path d="M29-3h6c3 0 14 46 17 56-8 12-32 12-40 0C15 43 26-3 29-3z" fill="#666"/><path d="M25 9c4 2 10 2 14 0l4 13c-6 4-16 4-22 0zM17 37c8 5 22 5 30 0l4 12c-8 5-30 5-38 0z" fill="#f0f0f0"/></svg></li>
    <li class="run"><svg viewBox="0 0 64 64"><circle cx="32" cy="31" r="28" fill="#333"/><g fill="none" stroke="#fff" stroke-width="4"><path d="M20 3h26l14 20-3 24-25 16L6 48 3 22zM24 18l16 2 10 12-8 12H28L14 30zM18-6l6 24M52-6L40 20M68 20L50 32M64 54L42 44M32 71V58l-4-14M0 54l28-10M-4 20l18 10"/></g><path d="M8 34c10-22 18 16 26 6s10-14 22-18c-4 14-14 26-22 18S22 26 8 34z" fill="#222"/></svg></li>
    <li class="run"><svg viewBox="0 0 64 64"><rect width="64" height="64" rx="14" fill="#fafafa"/><path d="M32 8c15 0 25 10 25 23S47 54 32 54c-3 0-6 0-8-1l-8 4v-8C10 45 7 39 7 31 7 18 17 8 32 8z" fill="#666"/><path d="M17 39l12-14 8 6 10-7-11 15-8-6z" fill="#fff"/></svg></li>
    <li class="run"><svg viewBox="0 0 64 64"><rect width="64" height="64" rx="14" fill="#dcdcdc"/><circle cx="32" cy="32" r="12" fill="none" stroke="#555" stroke-width="11"/><path d="M32 14c12 0 18 8 18 18v18L39 38" fill="#999"/><rect x="26" y="25" width="13" height="14" rx="4" fill="#fff"/></svg></li>
    <li class="run"><svg viewBox="0 0 64 64"><path d="M14 3h52v58H14z" fill="#666"/><path d="M14 3h26v14H14z" fill="#888"/><path d="M40 3h26v14H40z" fill="#bbb"/><path d="M40 17h26v15H40z" fill="#999"/><path d="M14 46h52v15H14z" fill="#484848"/><rect x="-2" y="15" width="34" height="34" rx="2" fill="#4e4e4e"/><text x="15" y="41" font-size="24" font-weight="600" text-anchor="middle" fill="#fff">X</text></svg></li>
    <li class="run"><svg viewBox="0 0 64 64"><path d="M7-3h34l18 20v50H7z" fill="#f2f2f2"/><path d="M40-3v20h19z" fill="#bbb"/><path d="M-5 68l6-8M-4 59h7v8" fill="none" stroke="#ddd" stroke-width="1.500"/></svg></li>
    <li class="div"></li>
    <li><svg viewBox="0 0 64 64"><path d="M12-5h26l14 18v51H12z" fill="#ccc"/><path d="M9-1h26l20 22v46H8z" fill="#f2f2f2"/><path d="M38 0v16h12z" fill="#aaa"/><path d="M17 25h30v31H17z" fill="#999"/><path d="M21 27h20v3H21z" fill="#222"/><circle cx="32" cy="41" r="10" fill="#bbb" stroke="#777"/></svg></li>
    <li><svg viewBox="0 0 64 64"><path d="M5 6h54l-6 56c-2 6-40 6-42 0z" fill="#6a6a6a"/><path d="M14 12l4 50M44 12l-2 50" stroke="#9a9a9a" stroke-width="4" opacity=".6"/><ellipse cx="32" cy="8" rx="27" ry="5" fill="#333"/><path d="M8 8l5-12 9 6 8-7 8 6 9-5 10 11-7 5-8-5-6 6-9-6-7 6z" fill="#ddd"/><path d="M16 0l5 9M30 0l-3 8 8-4M42 1l4 7" stroke="#555" stroke-width="2" fill="none"/></svg></li>
  </ul>
</section>
</div>
</body>
</html>
```

FILE: styles.css
```css
* { box-sizing: border-box; margin: 0; padding: 0; }
html, body { background: #000; overflow: hidden; }
body { font-family: Inter, "Open Sans", sans-serif; }
ul { list-style: none; }
svg { overflow: visible; flex: none; display: block; }
.defs { position: absolute; }
.stage { width: 6720px; height: 2160px; zoom: 0.6095238; display: flex; align-items: flex-start; overflow: hidden; }
.display { position: relative; overflow: hidden; }
.left { width: 2880px; height: 1800px; flex: none; }
.right { width: 3840px; height: 2160px; flex: none; display: flex; flex-direction: column; }
.wallpaper { position: absolute; inset: 0; width: 100%; height: 100%; }

/* menu bars */
.menubar { --hole: #000; --dot: #777; position: relative; height: 48px; padding: 0 38px 0 44px; display: flex; align-items: center; font-size: 26px; letter-spacing: -0.3px; white-space: nowrap; color: #e8e8e8; }
.menubar.dim { --hole: #262626; --dot: #3c3c3c; color: #676767; background: linear-gradient(90deg, #3b3b3b, #262626 65%); }
.menubar .apple { width: 25px; height: 28px; margin: -5px 46px 0 0; }
.menubar b { font-weight: 700; flex: none; }
.menubar span { flex: none; }
.menubar.dim b { color: #757575; }
.extras { width: 680px; height: 48px; margin-left: auto; margin-right: 27px; }
.menubar time { width: 210px; flex: none; letter-spacing: 0; }

/* desktop icons */
.item { position: absolute; width: 240px; display: flex; flex-direction: column; align-items: center; }
.item figcaption { margin-top: 29px; font-size: 25px; font-weight: 600; line-height: 31.500px; text-align: center; color: #fff; white-space: nowrap; text-shadow: 0 2px 4px rgba(0,0,0,.8); letter-spacing: 0; }
.item .doc + figcaption { margin-top: 20px; }
.free { position: absolute; }
.cut { position: absolute; left: 2565px; color: #fff; font-size: 24px; font-weight: 600; line-height: 32px; }
.cut span { display: block; }

/* Finder */
.finder { position: absolute; left: 724px; top: 337px; width: 1840px; height: 873px; display: flex; border-radius: 20px; overflow: hidden; background: #282828; border: 2px solid #5c5c5c; border-bottom-color: #4c4c4c; box-shadow: 0 0 0 1px #000, 0 20px 50px rgba(0,0,0,.45); }
.finder aside { position: relative; width: 752px; border-right: 2px solid #000; padding: 39px 0 0 30px; overflow: hidden; flex: none; }
.lights { display: flex; gap: 16px; padding-left: 7px; }
.lights i { width: 24px; height: 24px; border-radius: 50%; background: #464646; }
.finder h4 { font-size: 22px; line-height: 30px; color: #5f5f5f; font-weight: 600; margin-top: 45px; letter-spacing: 0; }
.finder h4 ~ h4 { margin-top: 30px; }
.finder h4 + ul { margin-top: 4px; }
.finder aside li { height: 56px; display: flex; align-items: center; font-size: 26px; color: #a2a2a2; letter-spacing: -.2px; padding-right: 72px; }
.finder aside li svg { width: 30px; height: 30px; margin: 0 15px 0 4px; color: #b0b0b0; }
.finder aside li .eject { width: 18px; height: 20px; margin: 0 0 0 auto; color: #4b4b4b; }
.bar { position: absolute; width: 16px; border-radius: 8px; background: #6a6a6a; }
.bar.side { right: 6px; top: 109px; height: 440px; }
.bar.table { right: 4px; top: 165px; height: 172px; }
.finder main { position: relative; flex: 1; display: flex; flex-direction: column; background: #282828; }
.finder header { height: 105px; flex: none; border-bottom: 2px solid #000; position: relative; display: flex; align-items: center; }
.finder header svg { position: absolute; inset: 0; width: 1086px; height: 105px; }
.finder header strong { margin-left: 176px; font-size: 29px; font-weight: 700; color: #5d5d5d; letter-spacing: -.2px; }
.heads { height: 54px; flex: none; border-bottom: 2px solid #393939; background: #202020; display: flex; align-items: center; font-size: 22px; color: #999; letter-spacing: 0; }
.heads b { width: 367px; padding-left: 94px; color: #ddd; font-weight: 600; }
.heads svg { width: 16px; height: 14px; margin-left: 94px; margin-right: 19px; }
.heads span { height: 40px; line-height: 40px; border-left: 2px solid #363636; padding-left: 14px; }
.heads .d { width: 362px; }
.heads .s { width: 195px; border-right: 2px solid #363636; }
.rows { width: 1057px; height: 684px; flex: none; overflow: hidden; padding-top: 10px; background: #202020; border-right: 2px solid #363636; border-bottom: 2px solid #363636; }
.rows li { height: 40px; display: flex; align-items: center; font-size: 26px; letter-spacing: 0; color: #dcdcdc; padding-left: 32px; padding-right: 16px; white-space: nowrap; }
.rows li:nth-child(even) { background: #292929; }
.rows .ch { width: 10px; height: 18px; margin-right: 12px; color: #959595; flex: none; }
.rows .open { transform: rotate(90deg); }
.rows .ic { width: 28px; height: 26px; margin-right: 12px; }
.rows .tall { height: 30px; }
.rows span { width: 416px; flex: none; }
.rows time { color: #979797; flex: 1; letter-spacing: .1px; }
.rows em { font-style: normal; color: #979797; }
.hscroll { padding: 5px 4px; }
.hscroll div { width: 838px; height: 16px; border-radius: 8px; background: #666; }

/* Chrome */
.chrome { margin-top: 2px; height: 1998px; flex: none; border-radius: 20px 20px 0 0; overflow: hidden; background: #1f1f1f; display: flex; flex-direction: column; box-shadow: inset 0 2px #555; }
.strip { height: 84px; padding: 16px 0 0 42px; display: flex; align-items: center; flex: none; }
.strip .lights { padding: 0 0 0 12px; margin-top: -16px; width: 145px; flex: none; }
.strip .lights i:nth-child(1) { background: #646464; }
.strip .lights i:nth-child(2) { background: #979797; }
.strip .lights i:nth-child(3) { background: #888; }
.strip ul { display: flex; height: 68px; }
.strip li { width: 152px; display: flex; align-items: center; padding-left: 15px; background: linear-gradient(#545454, #545454) right center / 2px 42px no-repeat; font-size: 24px; letter-spacing: -.3px; color: #ababab; }
.strip li.last { background: none; }
.strip li svg { width: 32px; height: 32px; margin-right: 16px; }
.strip li span { width: 80px; white-space: nowrap; -webkit-mask-image: linear-gradient(90deg, #000 62%, transparent 98%); mask-image: linear-gradient(90deg, #000 62%, transparent 98%); }
.strip li.on { position: relative; background: #303030; border-radius: 16px 16px 0 0; color: #e8e8e8; width: 153px; }
.strip li.on::before, .strip li.on::after { content: ""; position: absolute; bottom: 0; left: -16px; width: 16px; height: 16px; background: radial-gradient(circle at 0 0, transparent 15.500px, #303030 16px); }
.strip li.on::after { left: auto; right: -16px; background: radial-gradient(circle at 100% 0, transparent 15.500px, #303030 16px); }
.strip li.on span { width: 36px; }
.strip li.on .x { width: 18px; height: 18px; margin: 0 0 0 12px; }
.plus { width: 24px; height: 24px; margin-left: 31px; }
.tools { height: 72px; background: #303030; display: flex; align-items: center; flex: none; }
.nav { width: 200px; height: 60px; margin-right: 17px; }
.omni { width: 2767px; height: 56px; border-radius: 28px; background: #1f1f1f; display: flex; align-items: center; padding: 0 22px 0 25px; font-size: 28px; letter-spacing: -.05px; color: #f0f0f0; flex: none; }
.omni p { margin-left: 24px; flex: 1; }
.omni span { color: #8d8d8d; }
.star { width: 30px; height: 30px; }
.exts { display: flex; margin-left: 15px; }
.exts li { width: 63.800px; display: flex; justify-content: center; align-items: center; position: relative; }
.exts svg { width: 32px; height: 32px; }
.exts .me { width: 42px; height: 42px; }
.tag { position: absolute; left: 36px; top: 20px; min-width: 23px; height: 24px; border-radius: 4px; background: #666; color: #fff; font: 600 19px/24px Inter, sans-serif; text-align: center; }
.tag.k { background: #111; }
.tag.n { left: 6px; width: 52px; background: #888; font-size: 18px; }
.marks { height: 66px; padding: 0 0 8px 29px; background: #303030; border-bottom: 2px solid #1c1c1c; display: flex; align-items: center; font-size: 25px; letter-spacing: -.5px; color: #dedede; flex: none; white-space: nowrap; }
.marks li { display: flex; align-items: center; flex: none; }
.marks .plusp { letter-spacing: -.9px; }
.marks svg { width: 32px; height: 32px; margin-right: 16px; }
.view { flex: 1; display: flex; min-height: 0; }
.page { width: 3811px; background: #e1e1e1; flex: none; overflow: hidden; font-family: "Liberation Sans", Arial, sans-serif; }
.scroll { flex: 1; background: #f8f8f8; padding: 6px 6px; }
.scroll div { width: 16px; height: 928px; border-radius: 8px; background: #bdbdbd; }

/* revenue page */
.ros { height: 180px; background: #555; position: relative; display: flex; align-items: flex-start; padding-left: 191px; }
.art { position: absolute; left: 2600px; top: 0; width: 1211px; height: 180px; overflow: hidden; }
.logo { position: relative; width: 311px; height: 180px; flex: none; font-family: "Liberation Serif", serif; color: #f0f0f0; padding-top: 56px; white-space: nowrap; }
.logo svg { position: absolute; left: 207px; top: 23px; width: 56px; height: 84px; }
.logo .r1 { font-size: 55px; line-height: 62px; letter-spacing: -.5px; }
.logo .r2 { font-size: 20.500px; line-height: 24px; font-weight: 700; letter-spacing: -.5px; margin-top: -2px; }
.logo .r3 { font-size: 21px; line-height: 24px; color: #bdbdbd; letter-spacing: .3px; }
.rtabs { display: flex; align-items: flex-start; gap: 23px; margin-top: 95px; position: relative; }
.rtabs li { height: 88px; border-radius: 8px 8px 0 0; background: linear-gradient(#686868, #4d4d4d); box-shadow: inset 0 2px #888, 0 0 0 1px #474747; color: #fff; font-size: 25.300px; font-weight: 700; text-align: center; line-height: 88px; white-space: nowrap; }
.rtabs li.on { background: linear-gradient(#fff 40%, #ececec); color: #5c5c5c; box-shadow: none; margin-right: -4px; }
.user { position: relative; margin-left: auto; padding: 49px 191px 0 0; color: #e8e8e8; font-size: 22px; }
.user p { display: flex; justify-content: flex-end; align-items: center; height: 36px; margin-bottom: 6px; white-space: nowrap; }
.user span { color: #fff; }
.user b { padding-left: 16px; }
.user b + b, .user span + b { border-left: 2px solid #4a4a4a; margin-left: 16px; line-height: 30px; }
.user svg { width: 20px; height: 24px; margin-right: 9px; }
.wrap { width: 2280px; margin-left: 766px; color: #6b6b6b; }
.tax { height: 90px; padding: 2px 27px 0 0; line-height: 90px; text-align: right; font-size: 27.500px; color: #777; }
.wrap h2 { font-size: 36px; font-weight: 400; color: #fff; line-height: 92px; height: 92px; padding-left: 20px; background: #7e7e7e; }
.freq { display: flex; background: #595959; height: 92px; }
.freq h2 { flex: 1; background: none; }
.add { width: 360px; background: #757575; color: #fff; font-size: 36px; line-height: 92px; display: flex; align-items: center; justify-content: flex-end; padding-right: 34px; white-space: nowrap; }
.add svg { width: 37px; height: 37px; margin: 5px 0 0 16px; }
.up { width: 28px; height: 18px; margin: 40px 67px 0 71px; }
.fav { width: 719px; height: 96px; margin: 46px 0 84px; background: #fff; font-size: 32px; line-height: 98px; padding-left: 23px; color: #777; }
.wrap section { margin-bottom: 42px; box-shadow: 0 6px 10px rgba(0,0,0,.09); }
.row { height: 119px; background: #fff; display: flex; align-items: center; justify-content: space-between; padding: 4px 62px 0 20px; font-size: 32px; font-weight: 700; }
.row + .row { border-top: 2px solid #d2d2d2; }
.row svg { width: 28px; height: 18px; margin-top: 6px; color: #111; }
.wrap a { font-size: 32px; line-height: 37px; border-bottom: 3px solid #7a7a7a; display: inline-block; color: #757575; }
.solo { height: 133px; background: #fff; padding: 40px 20px; }
.wrap .other { box-shadow: none; }
.cards { display: grid; grid-template-columns: repeat(3, 719px); justify-content: space-between; }
.cards div { height: 90px; padding: 41px 20px 0; background: #fff; white-space: nowrap; }

/* Dock */
.dock { position: relative; width: 3118px; height: 100px; margin: 2px 0 0 361px; flex: none; display: flex; padding: 11px 3px 0; border: 2px solid #3a3a3a; border-radius: 28px; background: #111; box-shadow: 0 0 50px 0 rgba(0,0,0,.2); }
.dock li { width: 82px; display: flex; flex-direction: column; align-items: center; position: relative; flex: none; }
.dock svg { width: 64px; height: 64px; }
.dock li > svg svg { width: 20px; height: 23px; }
.dock .run::after { content: ""; width: 8px; height: 8px; border-radius: 50%; background: #909090; margin-top: 9px; }
.dock i { position: absolute; left: 53px; top: -5px; width: 28px; height: 28px; border-radius: 50%; background: #505050; color: #fff; font: 500 18px/28px Inter, sans-serif; text-align: center; }
.dock .div { width: 37px; }
.dock .div::before { content: ""; width: 2px; height: 72px; background: #4c4c4c; }
```
